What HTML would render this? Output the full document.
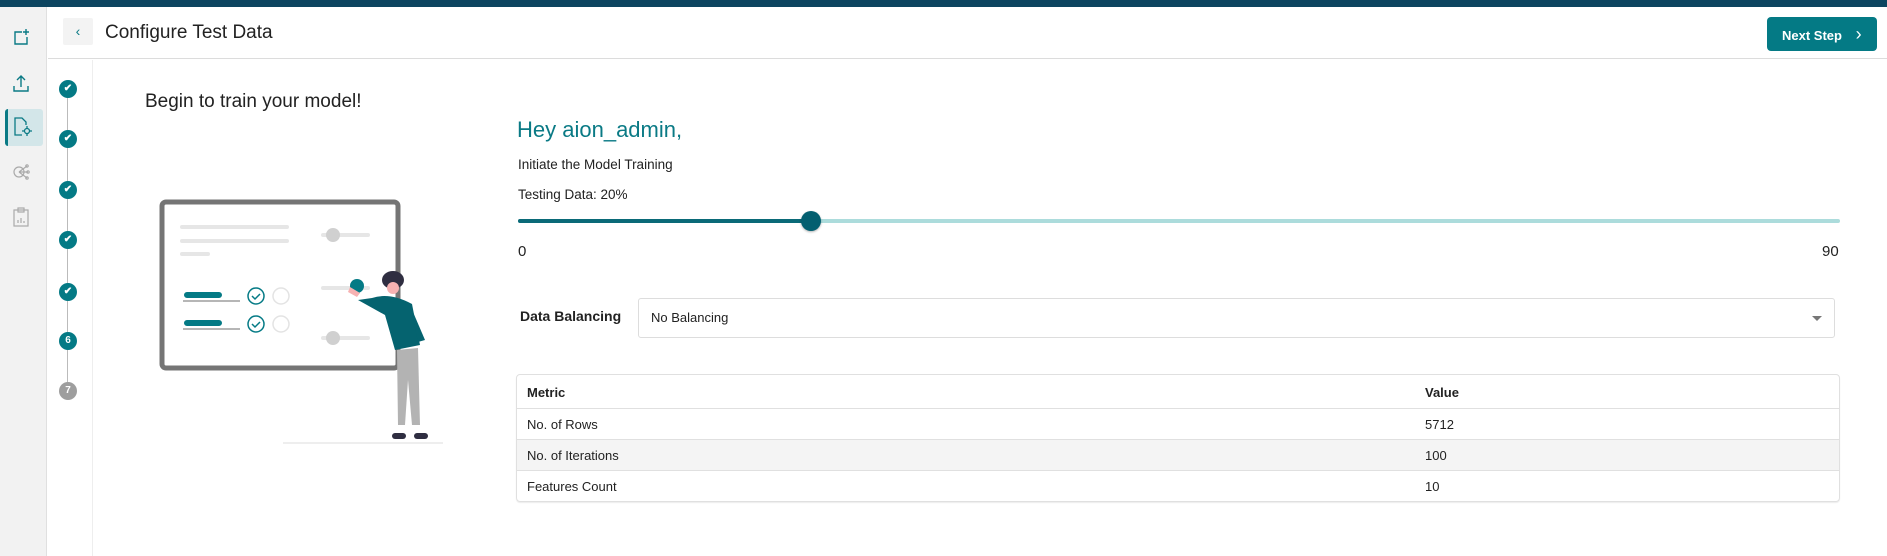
<!DOCTYPE html>
<html><head><meta charset="utf-8"><style>
*{box-sizing:border-box;margin:0;padding:0}
body{width:1887px;height:556px;overflow:hidden;background:#fff;font-family:"Liberation Sans",Arial,sans-serif;color:#222;position:relative}
.abs{position:absolute}
.topbar{left:0;top:0;width:1887px;height:7px;background:#0d4560}
.side{left:0;top:7px;width:47px;height:549px;background:#f2f2f2;border-right:1px solid #e0e0e0}
.hdr{left:48px;top:7px;width:1839px;height:52px;border-bottom:1px solid #dcdcdc;background:#fff}
.back{left:63px;top:18px;width:30px;height:27px;background:#f3f3f3;border-radius:2px;color:#0a7a85;font-size:14px;text-align:center;line-height:27px}
.title{left:105px;top:22px;font-size:19px;color:#222}
.btn{left:1767px;top:17px;width:110px;height:34px;background:#047a85;border-radius:4px;color:#fff;font-weight:bold;font-size:13px;line-height:34px;padding-left:15px}
.steps{left:48px;top:60px;width:45px;height:496px;border-right:1px solid #eee}
.vline{left:67px;top:89px;width:1px;height:302px;background:#bbb}
.c{width:18px;height:18px;border-radius:50%;background:#047a85;left:59px;color:#fff;font-size:10px;font-weight:bold;text-align:center;line-height:18px}
</style></head><body>
<div class="abs topbar"></div>
<div class="abs side"></div>
<svg class="abs" style="left:12px;top:28px" width="18" height="18" viewBox="0 0 18 18" fill="none" stroke="#0a7a85" stroke-width="1.4"><path d="M10 4H3v12h12V9"/><path d="M14 1v6M11 4h6"/></svg>
<svg class="abs" style="left:12px;top:74px" width="18" height="18" viewBox="0 0 18 18" fill="none" stroke="#0a7a85" stroke-width="1.4"><path d="M9 13V2M5 6l4-4 4 4M2 12v5h14v-5"/></svg>
<div class="abs" style="left:5px;top:109px;width:38px;height:37px;background:#d3e6e9;border-radius:3px;border-left:3px solid #0a7a85"></div>
<svg class="abs" style="left:13px;top:116px" width="20" height="22" viewBox="0 0 20 22" fill="none" stroke="#0a7a85" stroke-width="1.3"><path d="M9 19H2V2h7l4 4v3"/><circle cx="14" cy="15" r="2.5"/><path d="M14 10v2M14 18v2M9 15h2M17 15h2"/></svg>
<svg class="abs" style="left:12px;top:163px" width="18" height="18" viewBox="0 0 18 18" fill="none" stroke="#aaa" stroke-width="1.2"><circle cx="7" cy="9" r="5"/><path d="M7 9l8-6M7 9h9M7 9l8 6"/><circle cx="15" cy="3" r="1.2"/><circle cx="16" cy="9" r="1.2"/><circle cx="15" cy="15" r="1.2"/></svg>
<svg class="abs" style="left:13px;top:207px" width="16" height="20" viewBox="0 0 16 20" fill="none" stroke="#aaa" stroke-width="1.2"><rect x="1" y="3" width="14" height="16"/><rect x="5" y="1" width="6" height="4"/><path d="M5 16v-3M8 16v-5M11 16v-2"/></svg>

<div class="abs hdr"></div>
<div class="abs back">&#8249;</div>
<div class="abs title">Configure Test Data</div>
<div class="abs btn">Next Step <span style="font-size:18px;font-weight:normal;margin-left:10px">&#8250;</span></div>

<div class="abs steps"></div>
<div class="abs vline"></div>
<div class="abs c" style="top:80px">&#10004;</div>
<div class="abs c" style="top:130px">&#10004;</div>
<div class="abs c" style="top:181px">&#10004;</div>
<div class="abs c" style="top:231px">&#10004;</div>
<div class="abs c" style="top:283px">&#10004;</div>
<div class="abs c" style="top:332px">6</div>
<div class="abs c" style="top:382px;background:#9e9e9e">7</div>

<div class="abs" style="left:145px;top:91px;font-size:19px;color:#222">Begin to train your model!</div>

<svg class="abs" style="left:150px;top:190px" width="310" height="260" viewBox="0 0 310 260">
<rect x="12" y="12" width="236" height="166" rx="4" fill="#fff" stroke="#757575" stroke-width="5"/>
<g stroke="#e6e6e6" stroke-width="4" stroke-linecap="round"><path d="M32 37h105M32 51h105M32 64h26"/><path d="M173 45h45M173 98h45M173 148h45"/></g>
<circle cx="183" cy="45" r="7" fill="#d0d0d0"/><circle cx="183" cy="148" r="7" fill="#d0d0d0"/>
<circle cx="207" cy="96" r="7" fill="#047a85"/>
<g stroke="#047a85" stroke-width="6" stroke-linecap="round"><path d="M37 105h32M37 133h32"/></g>
<g stroke="#9e9e9e" stroke-width="1.5"><path d="M33 111h57M33 139h57"/></g>
<g fill="none" stroke="#047a85" stroke-width="1.5"><circle cx="106" cy="106" r="8"/><circle cx="106" cy="134" r="8"/><path d="M102 106l3 3 5-5M102 134l3 3 5-5"/></g>
<g fill="none" stroke="#e3e3e3" stroke-width="1.5"><circle cx="131" cy="106" r="8"/><circle cx="131" cy="134" r="8"/></g>
<ellipse cx="243" cy="90" rx="11" ry="9" fill="#2f2e41"/><circle cx="243" cy="98" r="6" fill="#f7b2b2"/>
<path d="M222 108 Q240 102 262 114 L270 155 L245 160 L235 125 L208 110 Z" fill="#05636f"/>
<path d="M200 97 l10 6 -3 4 -9 -5z" fill="#f7b2b2"/>
<path d="M260 115 L275 150 L268 152 Z" fill="#05636f"/>
<path d="M247 160 L268 158 L270 235 L262 235 L258 190 L255 235 L248 235 Z" fill="#b3b3b3"/>
<rect x="242" y="243" width="14" height="6" rx="3" fill="#2f2e41"/><rect x="264" y="243" width="14" height="6" rx="3" fill="#2f2e41"/>
<path d="M133 253h160" stroke="#eee" stroke-width="2"/>
</svg>

<div class="abs" style="left:517px;top:117px;font-size:22px;color:#0a7a85">Hey aion_admin,</div>
<div class="abs" style="left:518px;top:157px;font-size:13.5px;color:#222">Initiate the Model Training</div>
<div class="abs" style="left:518px;top:187px;font-size:13.5px;color:#222">Testing Data: 20%</div>
<div class="abs" style="left:518px;top:219px;width:1322px;height:4px;background:#acdcdc;border-radius:2px"></div>
<div class="abs" style="left:518px;top:219px;width:293px;height:4px;background:#0a6a78;border-radius:2px"></div>
<div class="abs" style="left:801px;top:211px;width:20px;height:20px;border-radius:50%;background:#035f70;box-shadow:0 1px 2px rgba(0,0,0,.3)"></div>
<div class="abs" style="left:518px;top:243px;font-size:15px">0</div>
<div class="abs" style="left:1822px;top:243px;font-size:15px">90</div>

<div class="abs" style="left:520px;top:308px;font-size:14px;font-weight:bold">Data Balancing</div>
<div class="abs" style="left:638px;top:298px;width:1197px;height:40px;border:1px solid #ddd;border-radius:3px;font-size:13px;line-height:38px;padding-left:12px">No Balancing</div>
<div class="abs" style="left:1812px;top:316px;width:0;height:0;border-left:5px solid transparent;border-right:5px solid transparent;border-top:5px solid #777"></div>

<div class="abs" style="left:516px;top:374px;width:1324px;height:128px;border:1px solid #e0e0e0;border-radius:4px;overflow:hidden;box-shadow:0 1px 1px rgba(0,0,0,.08);font-size:13px">
<div style="height:34px;border-bottom:1px solid #e0e0e0;position:relative;font-weight:bold"><span class="abs" style="left:10px;top:10px">Metric</span><span class="abs" style="left:908px;top:10px">Value</span></div>
<div style="height:31px;border-bottom:1px solid #e0e0e0;position:relative"><span class="abs" style="left:10px;top:8px">No. of Rows</span><span class="abs" style="left:908px;top:8px">5712</span></div>
<div style="height:31px;border-bottom:1px solid #e0e0e0;position:relative;background:#f4f4f4"><span class="abs" style="left:10px;top:8px">No. of Iterations</span><span class="abs" style="left:908px;top:8px">100</span></div>
<div style="height:31px;position:relative"><span class="abs" style="left:10px;top:8px">Features Count</span><span class="abs" style="left:908px;top:8px">10</span></div>
</div>
</body></html>
